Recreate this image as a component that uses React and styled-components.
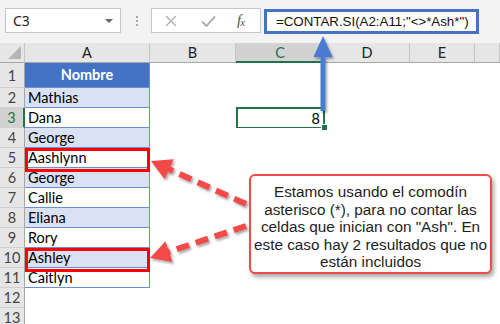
import React from 'react';
import styled, { createGlobalStyle, css } from 'styled-components';

const GlobalStyle = createGlobalStyle`
  html, body { margin: 0; padding: 0; background: #fff; }
  body { width: 500px; height: 324px; overflow: hidden; }
`;

const GREEN = '#217346';
const TABLE_BLUE = '#4472c4';
const LINE_BLUE = '#6b91d4';
const BAND = '#d9e1f2';

const Page = styled.div`
  position: relative;
  width: 500px;
  height: 324px;
  overflow: hidden;
  background: #fff;
  font-family: Lato, "Liberation Sans", sans-serif;
`;

const Toolbar = styled.div`
  display: flex;
  align-items: flex-start;
  height: 43px;
  box-sizing: border-box;
  padding: 8px 0 0 5px;
  background: #f3f3f3;
`;

const NameBox = styled.div`
  width: 116px;
  height: 25px;
  box-sizing: border-box;
  background: #fff;
  border: 1px solid #c6c6c6;
  display: flex;
  align-items: center;
  justify-content: space-between;
  padding: 0 7px 0 7px;
  font: 14px "Noto Sans", sans-serif;
  color: #222;
`;

const Caret = styled.span`
  width: 0;
  height: 0;
  border-left: 4px solid transparent;
  border-right: 4px solid transparent;
  border-top: 4px solid #666;
`;

const Grip = styled.div`
  display: flex;
  flex-direction: column;
  gap: 2px;
  margin: 8px 13px 0 15px;
`;

const GripDot = styled.span`
  width: 2px;
  height: 2px;
  background: #a8a8a8;
`;

const FxBox = styled.div`
  width: 110px;
  height: 25px;
  box-sizing: border-box;
  background: #fff;
  border: 1px solid #c6c6c6;
  display: flex;
  align-items: center;
  padding-left: 13px;
  gap: 20px;
`;

const Fx = styled.span`
  font: italic 15px "Liberation Serif", serif;
  color: #555;
  margin-left: 1px;
  letter-spacing: -1px;
  & sub { font-size: 11px; vertical-align: -1px; }
`;

const FormulaBox = styled.div`
  margin: 1px 0 0 3px;
  width: 215px;
  height: 25px;
  box-sizing: border-box;
  border: 3px solid ${TABLE_BLUE};
  background: #fff;
  display: flex;
  align-items: center;
  padding-left: 9px;
  font: 13.3px "Liberation Sans", Arial, sans-serif;
  color: #111;
  white-space: nowrap;
`;

const Sheet = styled.div`
  display: grid;
  grid-template-columns: 25px 125px 86px 89px 85px 65px 25px;
  grid-template-rows: 20px 25px repeat(12, 20px);
`;

const Corner = styled.div`
  position: relative;
  background: #e6e6e6;
  border-right: 1px solid #c6c6c6;
  border-bottom: 1px solid #a6a6a6;
  box-sizing: border-box;
  &::after {
    content: '';
    position: absolute;
    right: 3px;
    bottom: 3px;
    width: 0;
    height: 0;
    border-left: 13px solid transparent;
    border-bottom: 13px solid #b6b6b6;
  }
`;

const ColHead = styled.div`
  box-sizing: border-box;
  background: ${(p) => (p.$active ? '#d2d2d2' : '#e6e6e6')};
  border-right: 1px solid #c6c6c6;
  border-bottom: ${(p) => (p.$active ? `2px solid ${GREEN}` : '1px solid #a6a6a6')};
  display: flex;
  align-items: center;
  justify-content: center;
  padding-top: ${(p) => (p.$active ? '1px' : '0')};
  font-size: 14.5px;
  color: ${(p) => (p.$active ? GREEN : '#222')};
`;

const RowHead = styled.div`
  box-sizing: border-box;
  background: ${(p) => (p.$active ? '#d2d2d2' : '#e6e6e6')};
  border-right: ${(p) => (p.$active ? `2px solid ${GREEN}` : '1px solid #a6a6a6')};
  border-bottom: 1px solid #d0d0d0;
  display: flex;
  align-items: ${(p) => (p.$tall ? 'flex-end' : 'center')};
  justify-content: center;
  padding-bottom: ${(p) => (p.$tall ? '3px' : '0')};
  font-size: 14.5px;
  color: ${(p) => (p.$active ? GREEN : '#444')};
`;

const NameCell = styled.div`
  position: relative;
  box-sizing: border-box;
  display: flex;
  align-items: ${(p) => (p.$variant === 'header' ? 'flex-end' : 'center')};
  justify-content: ${(p) => (p.$variant === 'header' ? 'center' : 'flex-start')};
  padding: ${(p) => (p.$variant === 'header' ? '0 0 4px 0' : '0 0 0 3px')};
  background: ${(p) =>
    p.$variant === 'header' ? TABLE_BLUE : p.$variant === 'band' ? BAND : '#fff'};
  color: ${(p) => (p.$variant === 'header' ? '#fff' : '#000')};
  font-weight: ${(p) => (p.$variant === 'header' ? 700 : 400)};
  font-size: 14.5px;
  border-right: 1px solid ${LINE_BLUE};
  border-bottom: 1px solid ${LINE_BLUE};
  ${(p) =>
    p.$marked &&
    css`
      &::after {
        content: '';
        position: absolute;
        left: 0;
        top: 0;
        width: 125px;
        height: 24px;
        box-sizing: border-box;
        border: 3px solid #ff0000;
        z-index: 2;
      }
    `}
`;

const Cell = styled.div`
  position: relative;
  background: #fff;
  display: flex;
  align-items: center;
  justify-content: flex-end;
  padding-right: 5px;
  font-size: 14.5px;
  color: #000;
  ${(p) =>
    p.$selected &&
    css`
      &::after {
        content: '';
        position: absolute;
        left: 0;
        top: -1px;
        right: 0;
        bottom: -1px;
        border: 2px solid ${GREEN};
      }
      &::before {
        content: '';
        position: absolute;
        right: -3px;
        bottom: -3px;
        width: 5px;
        height: 5px;
        background: ${GREEN};
        border: 1px solid #fff;
        z-index: 1;
      }
    `}
`;

const Overlay = styled.svg`
  position: absolute;
  left: 0;
  top: 0;
  width: 500px;
  height: 324px;
  pointer-events: none;
  z-index: 3;
`;

const Callout = styled.div`
  position: absolute;
  left: 249px;
  top: 174px;
  width: 243px;
  height: 100px;
  box-sizing: border-box;
  background: #fff;
  border: 2px solid #f24a4a;
  border-radius: 6px;
  box-shadow: 2px 3px 4px rgba(0, 0, 0, 0.35);
  padding: 7px 0 0;
  text-align: center;
  white-space: nowrap;
  font: 15.3px/17.6px "Liberation Sans", Arial, sans-serif;
  color: #1e1e1e;
  z-index: 4;
`;

const CalloutLine = styled.div`
  display: block;
`;

const columns = ['A', 'B', 'C', 'D', 'E', ''];

const rows = [
  { name: 'Nombre', variant: 'header' },
  { name: 'Mathias', variant: 'band' },
  { name: 'Dana', variant: 'plain' },
  { name: 'George', variant: 'band' },
  { name: 'Aashlynn', variant: 'plain', marked: true },
  { name: 'George', variant: 'band' },
  { name: 'Callie', variant: 'plain' },
  { name: 'Eliana', variant: 'band' },
  { name: 'Rory', variant: 'plain' },
  { name: 'Ashley', variant: 'band', marked: true },
  { name: 'Caitlyn', variant: 'plain' },
  null,
  null,
];

const calloutLines = [
  'Estamos usando el comodín',
  'asterisco (*), para no contar las',
  'celdas que inician con "Ash". En',
  'este caso hay 2 resultados que no',
  'están incluidos',
];

function RedArrow({ tail, tip }) {
  const dx = tip[0] - tail[0];
  const dy = tip[1] - tail[1];
  const len = Math.hypot(dx, dy);
  const ux = dx / len;
  const uy = dy / len;
  const headLen = 20;
  const half = 11;
  const bx = tip[0] - ux * headLen;
  const by = tip[1] - uy * headLen;
  const px = -uy * half;
  const py = ux * half;
  return (
    <g filter="url(#shadow)">
      <line
        x1={tail[0]}
        y1={tail[1]}
        x2={bx + ux * 2}
        y2={by + uy * 2}
        stroke="#f24a4a"
        strokeWidth="6"
        strokeDasharray="13 7"
      />
      <polygon
        points={`${tip[0]},${tip[1]} ${bx + px},${by + py} ${bx - px},${by - py}`}
        fill="#f24a4a"
      />
    </g>
  );
}

export default function App() {
  return (
    <Page>
      <GlobalStyle />
      <Toolbar>
        <NameBox>
          C3
          <Caret />
        </NameBox>
        <Grip>
          <GripDot />
          <GripDot />
          <GripDot />
        </Grip>
        <FxBox>
          <svg width="12" height="12" viewBox="0 0 12 12">
            <path d="M1 1 L11 11 M11 1 L1 11" stroke="#b0b0b0" strokeWidth="1.4" fill="none" />
          </svg>
          <svg width="15" height="12" viewBox="0 0 15 12" style={{ marginLeft: 4 }}>
            <path d="M1 6.5 L5.5 11 L14 1.5" stroke="#b0b0b0" strokeWidth="2" fill="none" />
          </svg>
          <Fx>
            f<sub>x</sub>
          </Fx>
        </FxBox>
        <FormulaBox>=CONTAR.SI(A2:A11;"&lt;&gt;*Ash*")</FormulaBox>
      </Toolbar>

      <Sheet>
        <Corner />
        {columns.map((c, i) => (
          <ColHead key={i} $active={c === 'C'}>
            {c}
          </ColHead>
        ))}
        {rows.map((r, i) => {
          const n = i + 1;
          return (
            <React.Fragment key={n}>
              <RowHead $active={n === 3} $tall={n === 1}>
                {n}
              </RowHead>
              {r ? (
                <NameCell $variant={r.variant} $marked={r.marked}>
                  {r.name}
                </NameCell>
              ) : (
                <Cell />
              )}
              <Cell />
              <Cell $selected={n === 3}>{n === 3 ? '8' : ''}</Cell>
              <Cell />
              <Cell />
              <Cell />
            </React.Fragment>
          );
        })}
      </Sheet>

      <Overlay viewBox="0 0 500 324">
        <defs>
          <filter id="shadow" x="-20%" y="-20%" width="140%" height="140%">
            <feDropShadow dx="1.5" dy="2" stdDeviation="1.2" floodColor="#000" floodOpacity="0.35" />
          </filter>
        </defs>
        <g filter="url(#shadow)">
          <rect x="320.5" y="55" width="5" height="56" fill="#4a7bd0" />
          <polygon points="323,36 313.5,57 332.5,57" fill="#4a7bd0" />
        </g>
        <RedArrow tail={[246, 204]} tip={[151, 161]} />
        <RedArrow tail={[246, 226]} tip={[150, 258]} />
      </Overlay>

      <Callout>
        {calloutLines.map((line) => (
          <CalloutLine key={line}>{line}</CalloutLine>
        ))}
      </Callout>
    </Page>
  );
}
